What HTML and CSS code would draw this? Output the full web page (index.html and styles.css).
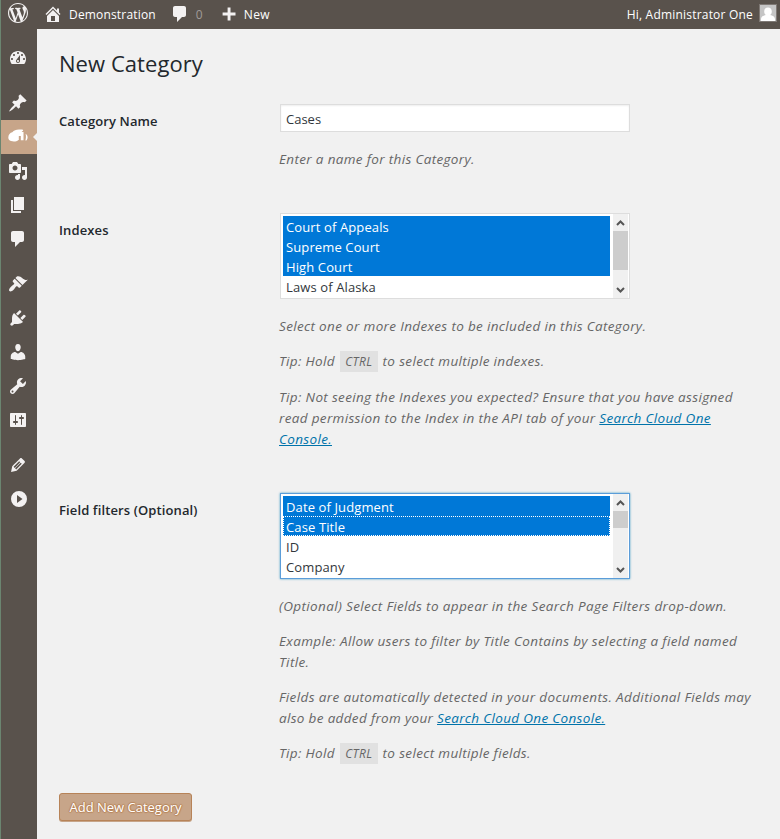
FILE: index.html
```html
<!DOCTYPE html>
<html lang="en">
<head>
<meta charset="utf-8">
<title>New Category</title>
<link rel="stylesheet" href="styles.css">
</head>
<body>
<header class="adminbar">
  <svg class="icon wp" viewBox="0 0 20 20"><path d="M20 10c0-5.51-4.49-10-10-10C4.48 0 0 4.49 0 10c0 5.52 4.48 10 10 10 5.51 0 10-4.48 10-10zM7.78 15.37L4.37 6.22c.55-.02 1.17-.08 1.17-.08.5-.06.44-1.13-.06-1.11 0 0-1.45.11-2.37.11-.18 0-.37 0-.58-.01C4.12 2.69 6.87 1.11 10 1.11c2.33 0 4.45.87 6.05 2.34-.68-.11-1.65.39-1.65 1.58 0 .74.45 1.36.9 2.1.35.61.55 1.36.55 2.46 0 1.49-1.4 5-1.4 5l-3.03-8.37c.54-.02.82-.17.82-.17.5-.05.44-1.25-.06-1.22 0 0-1.44.12-2.38.12-.87 0-2.33-.12-2.33-.12-.5-.03-.56 1.2-.06 1.22l.92.08 1.26 3.41zM17.41 10c.24-.64.74-1.87.43-4.25.7 1.29 1.05 2.71 1.05 4.25 0 3.29-1.73 6.24-4.4 7.78.97-2.59 1.94-5.2 2.92-7.78zM6.1 18.09C3.12 16.65 1.11 13.53 1.11 10c0-1.3.23-2.48.72-3.59C3.25 10.3 4.67 14.2 6.1 18.09zm4.03-6.63l2.58 6.98c-.86.29-1.76.45-2.71.45-.79 0-1.57-.11-2.29-.33.81-2.38 1.62-4.74 2.42-7.1z"/></svg>
  <svg class="icon home" viewBox="0 0 20 20"><path d="M16 8.5l1.53 1.53-1.06 1.06L10 4.6l-6.47 6.49-1.06-1.06L10 2.5l4 4v-2h2v4zm-6-2.46l6 5.99V18H4v-5.97zM12 17v-5H8v5h4z"/></svg>
  <span class="site">Demonstration</span>
  <svg class="icon bubble" viewBox="0 0 20 20"><path d="M5 2h9c1.1 0 2 .9 2 2v7c0 1.1-.9 2-2 2h-2l-5 5v-5H5c-1.1 0-2-.9-2-2V4c0-1.1.9-2 2-2z"/></svg>
  <span class="count">0</span>
  <svg class="icon plus" viewBox="0 0 20 20"><path d="M8.6 3.5h2.9v5h5v2.9h-5v5H8.6v-5h-5V8.500h5z"/></svg>
  <span class="new">New</span>
  <span class="account">Hi, Administrator One</span>
  <svg class="avatar" viewBox="0 0 18 18"><path class="avatar-edge" d="M0 0h18v18H0z"/><path class="avatar-bg" d="M1 1h16v16H1z"/><path class="avatar-person" d="M9 3.500c2.300 0 3.800 1.700 3.800 3.900 0 1.700-.8 2.900-1.700 3.600 2.600.6 4.700 1.700 4.900 4V17H2v-2c.2-2.300 2.300-3.400 4.900-4-.9-.7-1.700-1.900-1.700-3.600C5.200 5.200 6.700 3.500 9 3.500z"/></svg>
</header>
<div class="shell">
  <nav class="menu">
    <a class="item"><svg class="icon" viewBox="0 0 20 20"><path d="M3.76 16h12.48c1.1-1.37 1.76-3.11 1.76-5 0-4.42-3.58-8-8-8s-8 3.58-8 8c0 1.89.66 3.63 1.76 5zM10 4c.55 0 1 .45 1 1s-.45 1-1 1-1-.45-1-1 .45-1 1-1zM6 6c.55 0 1 .45 1 1s-.45 1-1 1-1-.45-1-1 .45-1 1-1zm8 0c.55 0 1 .45 1 1s-.45 1-1 1-1-.45-1-1 .45-1 1-1zm-5.370 5.550L12 7v6c0 1.100-.9 2-2 2s-2-.9-2-2c0-.57.24-1.080.63-1.450zM4 10c.55 0 1 .45 1 1s-.45 1-1 1-1-.45-1-1 .45-1 1-1zm12 0c.55 0 1 .45 1 1s-.45 1-1 1-1-.45-1-1 .45-1 1-1zm-5 3c0-.55-.45-1-1-1s-1 .45-1 1 .45 1 1 1 1-.45 1-1z"/></svg></a>
    <a class="item gap"><svg class="icon" viewBox="0 0 20 20"><path d="M10.44 3.02l1.82-1.82 6.36 6.35-1.83 1.82c-1.05-.68-2.48-.57-3.41.36l-.75.75c-.92.93-1.04 2.35-.35 3.41l-1.83 1.82-2.41-2.41-2.8 2.79c-.42.42-3.38 2.71-3.8 2.29s1.86-3.39 2.28-3.81l2.79-2.79L4.1 9.36l1.83-1.82c1.05.69 2.48.57 3.4-.36l.75-.75c.93-.92 1.05-2.35.36-3.41z"/></svg></a>
    <a class="item active"><svg class="icon" viewBox="0 0 20 20"><path d="M.3 10.500C.3 7.500 2.200 5.500 4.300 5.200 5.800 3.300 8 2.400 11 2.400h3c1.300 0 1.500 1 .6 1.700l-1 .8h1.900v8.300h-2.700V9h-2v4H10.400C8.500 14.600 5.500 14.900 3 14 1.300 13.400.3 12.300.3 10.500zM17.600 6.800c1.300.8 2 2 2 3.400s-.5 2.500-1.300 3.300h-.9c.6-2 .8-4.600.2-6.700z"/></svg></a>
    <a class="item"><svg class="icon" viewBox="0 0 20 20"><path d="M13 11V4c0-.55-.45-1-1-1h-1.67L9 1H5L3.67 3H2c-.55 0-1 .45-1 1v7c0 .55.45 1 1 1h10c.55 0 1-.45 1-1zM7 4.500c1.380 0 2.500 1.120 2.500 2.500S8.380 9.500 7 9.500 4.500 8.380 4.500 7 5.620 4.500 7 4.500zM14 6h5v10.500c0 1.380-1.120 2.500-2.500 2.500S14 17.880 14 16.500s1.120-2.500 2.500-2.500c.17 0 .34.02.5.05V9h-3V6zm-4 8.050V13h2v3.500c0 1.380-1.120 2.500-2.500 2.500S7 17.880 7 16.500 8.120 14 9.500 14c.17 0 .34.02.5.05z"/></svg></a>
    <a class="item"><svg class="icon" viewBox="0 0 20 20"><path d="M6 15V2h10v13H6zm-1 1h8v2H3V5h2v11z"/></svg></a>
    <a class="item"><svg class="icon" viewBox="0 0 20 20"><path d="M5 2h9c1.1 0 2 .9 2 2v7c0 1.1-.9 2-2 2h-2l-5 5v-5H5c-1.1 0-2-.9-2-2V4c0-1.1.9-2 2-2z"/></svg></a>
    <a class="item gap"><svg class="icon" viewBox="0 0 20 20"><path d="M14.48 11.06L7.41 3.99l1.5-1.5c.5-.56 2.3-.47 3.51.32 1.21.8 1.43 1.28 2.91 2.1 1.18.64 2.45 1.26 4.45.85zm-.71.71L6.7 4.7 4.93 6.47c-.39.39-.39 1.02 0 1.41l1.06 1.06c.39.39.39 1.03 0 1.42-.6.6-1.43 1.11-2.21 1.69-.35.26-.7.53-1.01.84C1.43 14.23.4 16.08 1.4 17.07c.99 1 2.84-.03 4.18-1.36.31-.31.58-.66.85-1.02.57-.78 1.08-1.61 1.69-2.21.39-.39 1.02-.39 1.41 0l1.06 1.06c.39.39 1.02.39 1.41 0z"/></svg></a>
    <a class="item"><svg class="icon" viewBox="0 0 20 20"><path d="M13.11 4.36L9.87 7.6 8 5.73l3.24-3.24c.35-.34 1.05-.2 1.56.32.52.51.66 1.21.31 1.55zm-8 1.77l.91-1.12 9.01 9.01-1.19.84c-.71.71-2.63 1.16-3.82 1.16H6.14L4.9 17.26c-.59.59-1.54.59-2.12 0-.59-.58-.59-1.53 0-2.12l1.24-1.24v-3.88c0-1.13.4-3.19 1.09-3.89zm7.26 3.97l3.24-3.24c.34-.35 1.04-.21 1.55.31.52.51.66 1.21.31 1.55l-3.24 3.25z"/></svg></a>
    <a class="item"><svg class="icon" viewBox="0 0 20 20"><path d="M10 9.25c-2.27 0-2.73-3.44-2.73-3.44C7 4.02 7.82 2 9.97 2c2.16 0 2.98 2.02 2.71 3.81 0 0-.41 3.44-2.68 3.44zm0 2.57L12.72 10c2.39 0 4.52 2.33 4.52 4.53v2.49s-3.65 1.13-7.24 1.13c-3.65 0-7.24-1.13-7.24-1.13v-2.49c0-2.25 1.94-4.48 4.47-4.48z"/></svg></a>
    <a class="item"><svg class="icon" viewBox="0 0 20 20"><path d="M16.68 9.77c-1.34 1.34-3.3 1.67-4.95.99l-5.41 6.52c-.99.99-2.59.99-3.58 0s-.99-2.59 0-3.57l6.52-5.42c-.68-1.65-.35-3.61.99-4.95 1.28-1.28 3.12-1.62 4.72-1.06l-2.89 2.89 2.82 2.82 2.86-2.87c.53 1.58.18 3.39-1.08 4.65zM3.81 16.21c.4.39 1.04.39 1.43 0 .4-.4.4-1.04 0-1.43-.39-.4-1.03-.4-1.43 0-.39.39-.39 1.03 0 1.43z"/></svg></a>
    <a class="item"><svg class="icon" viewBox="0 0 20 20"><path d="M18 16V4c0-.55-.45-1-1-1H3c-.55 0-1 .45-1 1v12c0 .55.45 1 1 1h14c.55 0 1-.45 1-1zM8 11h1c.55 0 1 .45 1 1s-.45 1-1 1H8v1.5c0 .28-.22.5-.5.5s-.5-.22-.5-.5V13H6c-.55 0-1-.45-1-1s.45-1 1-1h1V5.500c0-.28.22-.5.5-.5s.5.22.5.5V11zm5-2h-1c-.55 0-1-.45-1-1s.45-1 1-1h1V5.500c0-.28.22-.5.5-.5s.5.22.5.5V7h1c.55 0 1 .45 1 1s-.45 1-1 1h-1v5.500c0 .28-.22.5-.5.5s-.5-.22-.5-.5V9z"/></svg></a>
    <a class="item gap"><svg class="icon" viewBox="0 0 20 20"><path d="M13.89 3.39l2.71 2.72c.46.46.42 1.24.03 1.64l-8.01 8.02-5.56 1.16 1.16-5.58s7.6-7.63 7.99-8.03c.39-.39 1.22-.39 1.68.07zm-2.73 2.79l-5.59 5.61 1.11 1.11 5.54-5.65zm-2.97 8.23l5.58-5.6-1.07-1.08-5.59 5.6z"/></svg></a>
    <a class="item"><svg class="icon" viewBox="0 0 20 20"><path fill-rule="evenodd" d="M11 2a8 8 0 1 0 0 16 8 8 0 0 0 0-16zM9 6v8l5.500-4z"/></svg></a>
  </nav>
  <main class="content">
    <h1>New Category</h1>
    <section class="row name-row">
      <label class="label">Category Name</label>
      <div class="field">
        <div class="text-input">Cases</div>
        <p>Enter a name for this Category.</p>
      </div>
    </section>
    <section class="row index-row">
      <label class="label">Indexes</label>
      <div class="field">
        <div class="listbox">
          <ul class="options"><li class="on">Court of Appeals</li><li class="on">Supreme Court</li><li class="on">High Court</li><li>Laws of Alaska</li></ul>
          <div class="scroll"><svg class="arrow" viewBox="0 0 15 16"><path d="M4 11L7.500 7.500l3.500 3.500"/></svg><i class="thumb tall"></i><svg class="arrow down" viewBox="0 0 15 16"><path d="M4 6l3.500 3.500L11 6"/></svg></div>
        </div>
        <p>Select one or more Indexes to be included in this Category.</p>
        <p>Tip: Hold <kbd>CTRL</kbd> to select multiple indexes.</p>
        <p class="after-key">Tip: Not seeing the Indexes you expected? Ensure that you have assigned<br>read permission to the Index in the API tab of your <a href="#">Search Cloud One</a><br><a href="#">Console.</a></p>
      </div>
    </section>
    <section class="row filter-row">
      <label class="label">Field filters (Optional)</label>
      <div class="field">
        <div class="listbox focused">
          <ul class="options"><li class="on">Date of Judgment</li><li class="on current">Case Title</li><li>ID</li><li>Company</li></ul>
          <div class="scroll"><svg class="arrow" viewBox="0 0 15 16"><path d="M4 11L7.500 7.500l3.500 3.500"/></svg><i class="thumb"></i><svg class="arrow down" viewBox="0 0 15 16"><path d="M4 6l3.500 3.500L11 6"/></svg></div>
        </div>
        <p class="wide">(Optional) Select Fields to appear in the Search Page Filters drop-down.</p>
        <p class="wide">Example: Allow users to filter by Title Contains by selecting a field named<br>Title.</p>
        <p class="wide">Fields are automatically detected in your documents. Additional Fields may<br><span class="tight">also be added from your <a href="#">Search Cloud One Console.</a></span></p>
        <p>Tip: Hold <kbd>CTRL</kbd> to select multiple fields.</p>
      </div>
    </section>
    <button class="submit">Add New Category</button>
  </main>
</div>
</body>
</html>
```
FILE: styles.css
```css
* { box-sizing: border-box; }
body { margin: 0; height: 839px; overflow: hidden; background: #f1f1f1; color: #23282d; font: 13px/21px "Open Sans", "Noto Sans", sans-serif; }
.icon { display: block; width: 20px; height: 20px; fill: #f3f1f1; flex: none; }

.adminbar { display: flex; align-items: center; height: 29px; background: #59524c; color: #fff; font-size: 12px; letter-spacing: .17px; white-space: nowrap; border-left: 1px solid #6b8570; }
.wp { margin: -3px 0 0 7px; }
.home { margin: -2px 0 0 15px; }
.site { margin-left: 6px; }
.bubble { margin: -2px 0 0 14px; }
.count { margin-left: 6px; color: #a09b98; }
.plus { margin: -1px 0 0 16px; }
.new { margin-left: 5px; letter-spacing: .3px; }
.account { margin-left: auto; letter-spacing: .2px; }
.avatar { width: 18px; height: 18px; margin: -3px 3px 0 6px; }
.avatar-edge { fill: #7f7975; }
.avatar-bg { fill: #c5c5c5; }
.avatar-person { fill: #fff; }

.shell { display: flex; height: 810px; }
.menu { flex: none; width: 37px; padding-top: 12px; background: #59524c; border-left: 1px solid #6b8570; }
.item { display: flex; align-items: center; height: 34px; padding-left: 7px; }
.gap { margin-top: 11px; }
.active { position: relative; background: #c7a589; }
.active .icon { fill: #fff; }
.active::after { content: ""; position: absolute; right: 0; top: 13px; border: 4px solid transparent; border-left: 0; border-right-color: #f1f1f1; }

.content { flex: 1; padding: 19px 0 0 22px; }
h1 { margin: 0; font-size: 22px; font-weight: 400; line-height: 30px; letter-spacing: .06px; }
.row { display: flex; }
.name-row { margin-top: 26px; height: 109px; }
.index-row { height: 280px; }
.filter-row { height: 300px; }
.label { width: 220px; padding-top: 7px; font-weight: 600; letter-spacing: .12px; }
.field { flex: 1; color: #666; white-space: nowrap; }
.text-input { width: 350px; height: 28px; margin-left: 1px; padding: 0 5px; border: 1px solid #ddd; background: #fff; box-shadow: inset 0 1px 2px rgba(0,0,0,.07); color: #32373c; line-height: 29px; }
p { margin: 14px 0 0; font-size: 13.5px; font-style: italic; letter-spacing: .34px; }
.wide { letter-spacing: .37px; }
.tight { letter-spacing: .33px; }
.after-key { margin-top: 15px; }
.text-input + p { margin-top: 17px; }
.listbox { display: flex; width: 350px; height: 86px; margin: 0 0 0 1px; padding: 2px 0 0 2px; border: 1px solid #ddd; background: #fff; color: #32373c; letter-spacing: .12px; }
.listbox + p { margin-top: 17px; }
.focused { border-color: #5b9dd9; box-shadow: 0 0 2px rgba(30,140,190,.8); }
.options { flex: none; width: 327px; margin: 0; padding: 0; list-style: none; }
.options li { height: 20px; padding-left: 3px; line-height: 22px; }
.options .on { background: #0078d7; color: #fff; }
.options .current { border: 1px dotted #fff; padding-left: 2px; line-height: 20px; }
.scroll { display: flex; flex: none; flex-direction: column; width: 15px; height: 84px; margin: -2px 0 0 3px; background: #f0f0f0; }
.arrow { width: 15px; height: 16px; fill: none; stroke: #555; stroke-width: 2; }
.thumb { width: 15px; height: 17px; margin-top: 1px; background: #cdcdcd; }
.thumb.tall { height: 39px; }
.down { margin-top: auto; }
kbd { display: inline-block; width: 38px; height: 21px; margin: 0 1px; text-align: center; background: #e1e1e1; font: inherit; font-size: 12px; line-height: 22px; vertical-align: top; }
a { color: #0073aa; }
.submit { display: block; width: 133px; height: 28px; margin: 0; padding: 0; border: 1px solid #b78358; border-radius: 3px; background: #c7a589; box-shadow: 0 1px 0 #c7a589; color: #fff; font: 13px/26px "Open Sans", sans-serif; text-shadow: 0 -1px 1px #b78358, 1px 0 1px #b78358, 0 1px 1px #b78358, -1px 0 1px #b78358; }
```
